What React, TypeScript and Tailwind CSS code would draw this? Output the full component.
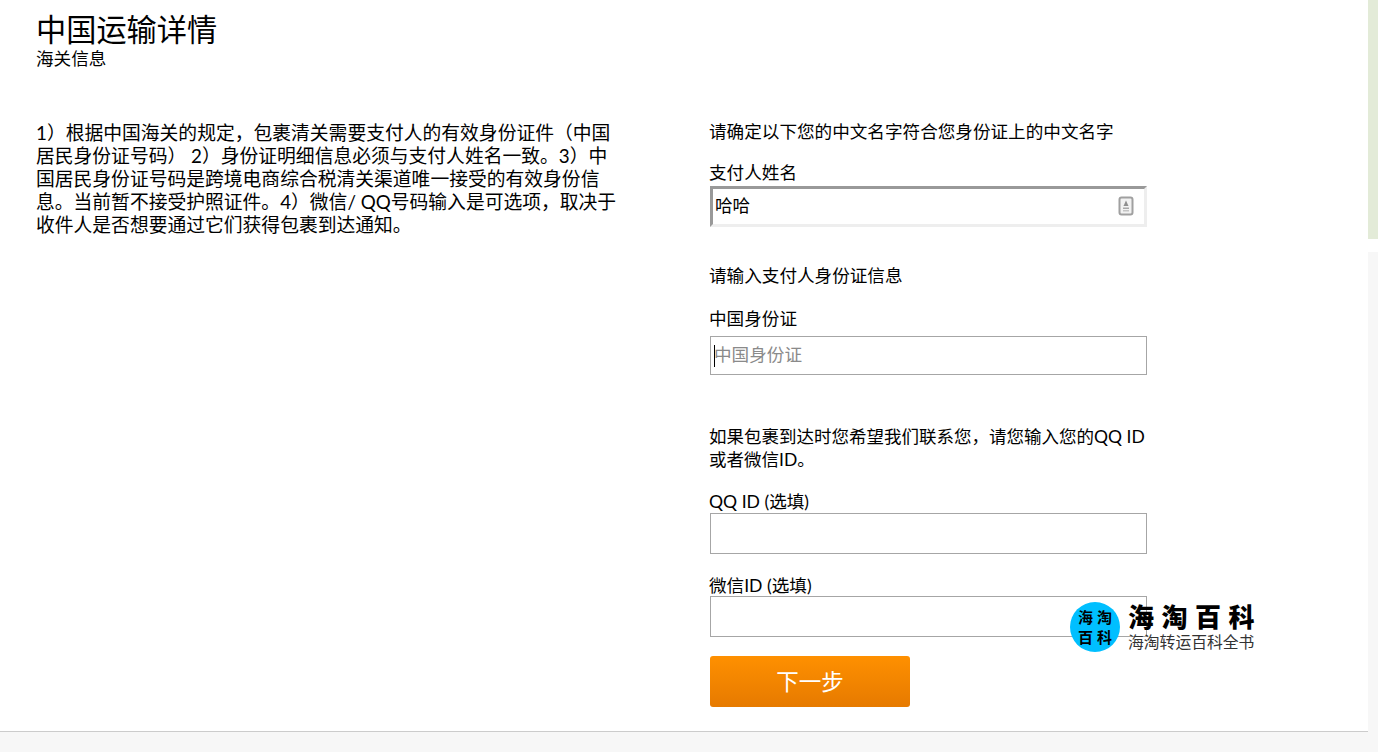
const font = "font-['Lato','Noto_Sans_CJK_SC',sans-serif]";

const Label = ({ children, className = "" }: { children: string; className?: string }) => (
  <p className={`-ml-px h-[23px] text-[17.6px] leading-[23px] text-black ${className}`}>{children}</p>
);

const App = () => {
  return (
    <div className={`flex h-[752px] w-[1378px] overflow-hidden bg-white ${font}`}>
      <div className="relative flex w-[1368px] shrink-0 flex-col">
        <div className="flex-1 pl-[37px]">
          <h1 className="-ml-px pt-[10px] text-[30.2px] leading-[38px] font-normal text-black">中国运输详情</h1>
          <p className="-ml-px h-[24px] text-[17.6px] leading-[21px] text-black">海关信息</p>

          <div className="flex">
            <p className="-ml-px mt-[49px] w-[584px] text-[18.8px] leading-[23px] text-black">
              1）根据中国海关的规定，包裹清关需要支付人的有效身份证件（中国居民身份证号码） 2）身份证明细信息必须与支付人姓名一致。3）中国居民身份证号码是跨境电商综合税清关渠道唯一接受的有效身份信息。当前暂不接受护照证件。4）微信/ QQ号码输入是可选项，取决于收件人是否想要通过它们获得包裹到达通知。
            </p>

            <div className="ml-[90px] w-[437px]">
              <Label className="mt-[48px]">请确定以下您的中文名字符合您身份证上的中文名字</Label>
              <Label className="mt-[18px]">支付人姓名</Label>
              <div className="mt-[2px] flex h-[41px] items-center justify-between border-[3px] border-t-[#999999] border-r-[#eeeeee] border-b-[#eeeeee] border-l-[#999999] pr-[10px] pl-[2px]">
                <span className="text-[17.6px] text-black">哈哈</span>
                <svg width="16" height="20" viewBox="0 0 16 20" className="mt-[-1px]">
                  <rect x="1.5" y="1.5" width="13" height="17" rx="2" fill="#f2f2f2" stroke="#a0a0a0" strokeWidth="2" />
                  <path d="M8 4.5 L10.5 10 L5.5 10 Z" fill="#8f8f8f" />
                  <rect x="5" y="11.5" width="6" height="1.5" fill="#a8a8a8" />
                  <rect x="5" y="14" width="6" height="1.5" fill="#c4c4c4" />
                </svg>
              </div>

              <Label className="mt-[37px]">请输入支付人身份证信息</Label>
              <Label className="mt-[20px]">中国身份证</Label>
              <div className="mt-[6px] flex h-[39px] items-center border border-[#a6a6a6] pl-[3px]">
                <span className="h-[22px] w-px bg-black" />
                <span className="-ml-px text-[17.6px] text-[#8a8a8a]">中国身份证</span>
              </div>

              <p className="-ml-px mt-[50px] w-[439px] text-[17.5px] leading-[23px] text-black">
                如果包裹到达时您希望我们联系您，请您输入您的QQ ID或者微信ID。
              </p>
              <Label className="mt-[19px]">QQ ID (选填)</Label>
              <div className="h-[41px] border border-[#a6a6a6]" />
              <Label className="mt-[20px]">微信ID (选填)</Label>
              <div className="-mt-px h-[41px] border border-[#a6a6a6]" />

              <button className="mt-[19px] h-[51px] w-[200px] rounded-[3px] bg-gradient-to-b from-[#ff9000] to-[#e67a00] text-[22.5px] text-white">
                下一步
              </button>
            </div>
          </div>
        </div>

        <div className="h-[21px] border-t border-[#cccccc] bg-[#f7f7f7]" />

        {/* watermark over the form */}
        <div className="absolute top-[602px] left-[1070px] flex items-start gap-[8px]">
          <div className="grid h-[50px] w-[50px] grid-cols-2 place-items-center rounded-full bg-[#00bfff] px-[6px] py-[5px] text-[15px] leading-[18px] font-bold text-black">
            <span>海</span>
            <span>淘</span>
            <span>百</span>
            <span>科</span>
          </div>
          <div>
            <p className="h-[30px] text-[26px] leading-[30px] font-black tracking-[7.5px] whitespace-nowrap text-black">海淘百科</p>
            <p className="text-[15.8px] leading-[19px] whitespace-nowrap text-[#333333]">海淘转运百科全书</p>
          </div>
        </div>
      </div>

      <div className="flex w-[10px] shrink-0 flex-col">
        <div className="h-[239px] bg-[#e3ebd8]" />
        <div className="h-[13px] bg-white" />
        <div className="flex-1 bg-[#f7f7f7]" />
      </div>
    </div>
  );
};
export default App;
